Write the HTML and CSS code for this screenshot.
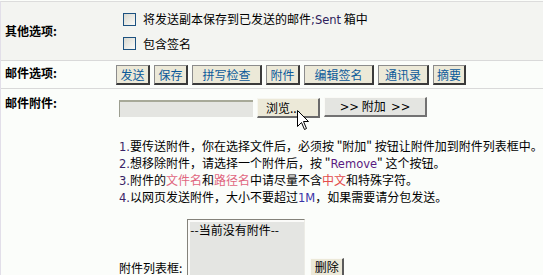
FILE: index.html
```html
<!DOCTYPE html>
<html lang="zh-CN">
<head>
    <meta charset="UTF-8">
    <meta name="viewport" content="width=device-width, initial-scale=1.0">
    <title>邮件选项</title>
    <link rel="stylesheet" href="styles.css">
</head>
<body>
    <div class="form">
        <div class="row row-other">
            <div class="label">其他选项:</div>
            <div class="field checks">
                <label class="check"><input type="checkbox"><span>将发送副本保存到已发送的邮件<span class="en">;Sent</span> 箱中</span></label>
                <label class="check"><input type="checkbox"><span>包含签名</span></label>
            </div>
        </div>

        <div class="row row-options">
            <div class="label">邮件选项:</div>
            <div class="field toolbar">
                <button class="btn">发送</button>
                <button class="btn">保存</button>
                <button class="btn btn-wide">拼写检查</button>
                <button class="btn">附件</button>
                <button class="btn btn-wide">编辑签名</button>
                <button class="btn btn-mid">通讯录</button>
                <button class="btn btn-narrow">摘要</button>
            </div>
        </div>

        <div class="row row-attach">
            <div class="label">邮件附件:</div>
            <div class="field">
                <div class="file-row">
                    <input class="file-path" type="text">
                    <button class="btn-browse">浏览...</button>
                    <button class="btn-attach"><span class="en">&gt;&gt;</span> 附加 &nbsp;<span class="en">&gt;&gt;</span></button>
                </div>

                <div class="tips">
                    <div><span class="num">1.</span>要传送附件，你在选择文件后，必须按 "附加" 按钮让附件加到附件列表框中。</div>
                    <div><span class="num">2.</span>想移除附件，请选择一个附件后，按 "<span class="en-remove">Remove</span>" 这个按钮。</div>
                    <div><span class="num">3.</span>附件的<span class="pink">文件名</span>和<span class="pink">路径名</span>中请尽量不含<span class="red">中文</span>和特殊字符。</div>
                    <div><span class="num">4.</span>以网页发送附件，大小不要超过<span class="blue">1M</span>，如果需要请分包发送。</div>
                </div>

                <div class="list-row">
                    <span class="list-label">附件列表框:</span>
                    <div class="listbox">
                        <div class="option">--当前没有附件--</div>
                    </div>
                    <button class="btn-delete">删除</button>
                </div>
            </div>
        </div>
    </div>

    <!-- mouse pointer over the browse button -->
    <svg class="cursor" width="13" height="21" viewBox="0 0 13 21">
        <path d="M0.5 0.5 L0.5 16.5 L4.5 12.5 L7.5 19.5 L9.5 18.5 L6.5 11.5 L11.5 11.5 Z" fill="#fff" stroke="#000" stroke-width="1"/>
    </svg>
</body>
</html>
```

FILE: styles.css
```css
* {
    box-sizing: border-box;
}
body {
    margin: 0;
    font-family: "Noto Sans CJK SC", "Noto Sans", sans-serif;
    font-size: 12px;
    line-height: 16px;
    color: #000;
    background-color: #fbfdfa;
    position: relative;
    min-height: 275px;
}
.form {
    margin-top: 1px;
    border-top: 1px solid #dcdcdc;
    border-left: 1px solid #e2dfe9;
}
.row {
    display: grid;
    grid-template-columns: 115px 1fr;
    border-bottom: 1px solid #d9d9d9;
}
.row:last-child {
    border-bottom: none;
}
.label {
    padding-left: 4px;
    font-weight: bold;
}
.row-other {
    background-color: #f3f4f1;
    height: 59px;
}
.row-other .label {
    align-self: center;
}
.checks {
    display: flex;
    flex-direction: column;
    gap: 11px;
    padding-top: 11px;
}
.check {
    display: flex;
    align-items: center;
    height: 13px;
}
.check input {
    appearance: none;
    width: 13px;
    height: 13px;
    margin: 0 7px;
    border: 1px solid #1c5180;
    background: linear-gradient(135deg, #d8d8d0, #fafaf8);
}
.en, .num, .en-remove, .blue {
    font-family: "DejaVu Sans", sans-serif;
    font-size: 11.5px;
}
.en {
    color: #2e1c5c;
}
.row-options .label {
    padding-top: 4px;
}
.toolbar {
    display: flex;
    gap: 4px;
    padding: 4px 0 3px;
}
.btn {
    width: 34px;
    height: 20px;
    padding: 0;
    font: inherit;
    color: #0b5a9a;
    background-color: #ece9d8;
    border-style: solid;
    border-width: 1px 2px 2px 1px;
    border-color: #8c8c8c #3a3a3a #3a3a3a #8c8c8c;
    text-align: center;
}
.btn-wide {
    width: 70px;
}
.btn-mid {
    width: 51px;
}
.btn-narrow {
    width: 33px;
}
.row-attach .label {
    padding-top: 6px;
}
.row-attach .field {
    padding-top: 8px;
}
.file-row {
    display: flex;
    align-items: flex-start;
    height: 21px;
}
.file-path {
    width: 134px;
    height: 17px;
    margin: 3px 0 0 3px;
    padding: 0;
    background-color: #e4e5e1;
    border: none;
    border-top: 2px solid #a7a998;
    border-left: 1px solid #9c9e90;
}
.btn-browse {
    width: 63px;
    height: 20px;
    margin: 1px 0 0 4px;
    padding: 0 0 0 8px;
    font: inherit;
    text-align: left;
    background-color: #ece9d8;
    border-style: solid;
    border-width: 1px 2px 2px 1px;
    border-color: #f6f6f0 #6a6a6a #6a6a6a #f6f6f0;
}
.btn-attach {
    width: 103px;
    height: 20px;
    margin-left: 4px;
    padding: 0;
    font: inherit;
    background-color: #e4e5e1;
    border-style: solid;
    border-width: 1px 2px 2px 1px;
    border-color: #fafaf6 #727272 #727272 #fafaf6;
}
.btn-attach .en {
    color: #000;
}
.tips {
    margin-top: 20px;
    padding-left: 3px;
    white-space: nowrap;
}
.num {
    color: #3a2466;
}
.en-remove {
    color: #5a1a80;
}
.pink {
    color: #e0667e;
}
.red {
    color: #e34b4b;
}
.blue {
    color: #3a34a8;
}
.list-row {
    display: flex;
    align-items: flex-end;
    margin-top: 13px;
    padding-left: 3px;
}
.listbox {
    width: 118px;
    height: 57px;
    margin-left: 5px;
    padding: 2px 2px 0;
    background-color: #e4e5e2;
    border: 1px solid;
    border-color: #84827a #ecece6 #ecece6 #84827a;
    box-shadow: inset 2px 2px 0 #fbfbf9;
}
.btn-delete {
    width: 34px;
    height: 19px;
    margin: 0 0 -1px 5px;
    padding: 0;
    font: inherit;
    background-color: #ece9d8;
    border-style: solid;
    border-width: 1px 2px 2px 1px;
    border-color: #fafaf6 #5a5a5a #5a5a5a #fafaf6;
}
.cursor {
    position: absolute;
    left: 297px;
    top: 110px;
}
```
